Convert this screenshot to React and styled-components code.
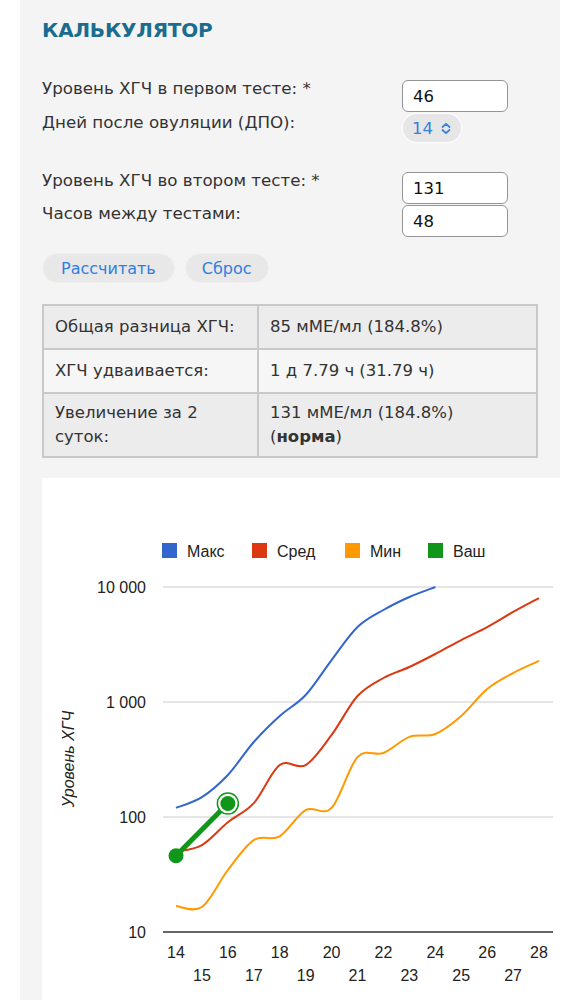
import React from "react";
import styled, { createGlobalStyle } from "styled-components";

const GlobalStyle = createGlobalStyle`
  html, body { margin: 0; padding: 0; background: #ffffff; }
  body { font-family: "DejaVu Sans", Verdana, sans-serif; color: #333; }
`;

const Page = styled.div`
  padding-left: 20px;
`;

const Panel = styled.div`
  width: 540px;
  min-height: 1000px;
  box-sizing: border-box;
  background: #f4f4f4;
  padding: 14px 22px 0 22px;
`;

const Title = styled.h2`
  margin: 0;
  font-size: 20px;
  line-height: 32px;
  font-weight: bold;
  color: #1b6d90;
  letter-spacing: -0.2px;
`;

const Group = styled.div`
  display: flex;
  flex-direction: column;
  gap: ${(p) => p.$gap}px;
  margin-top: ${(p) => p.$top}px;
`;

const Row = styled.div`
  display: flex;
  align-items: flex-start;
`;

const Label = styled.label`
  width: 360px;
  flex: none;
  margin-top: -2px;
  font-size: 16.7px;
  line-height: 20px;
  color: #333;
`;

const Input = styled.input`
  width: 106px;
  height: 32px;
  box-sizing: border-box;
  border: 1.5px solid #959595;
  border-radius: 6px;
  background: #fff;
  padding: 0 10px;
  font-family: "DejaVu Sans", Verdana, sans-serif;
  font-size: 16.5px;
  color: #111;
  outline: none;
`;

const SelectPill = styled.div`
  display: inline-flex;
  align-items: center;
  gap: 7px;
  height: 28px;
  box-sizing: border-box;
  padding: 0 9px 0 9px;
  margin-left: 1px;
  border-radius: 14px;
  background: #e6e6e6;
  box-shadow: 0 0 0 1.5px #fbfbfb;
  color: #3380e0;
  font-size: 16.5px;
`;

const Buttons = styled.div`
  display: flex;
  gap: 10px;
  margin-top: 16px;
`;

const Button = styled.button`
  height: 30px;
  padding: 0 ${(p) => p.$pad}px;
  border-radius: 15px;
  border: 1px solid #f1f1f1;
  background: #e8e8e8;
  color: #2f7de0;
  font-family: "DejaVu Sans", Verdana, sans-serif;
  font-size: 16px;
  cursor: pointer;
`;

const Table = styled.table`
  margin-top: 21px;
  width: 496px;
  border-collapse: collapse;
`;

const Tr = styled.tr`
  background: ${(p) => (p.$light ? "#f6f6f6" : "#ececec")};
`;

const Td = styled.td`
  width: ${(p) => p.$w || "auto"};
  border: 2px solid #c8c8c8;
  padding: ${(p) => (p.$tall ? "7px 11px 7px 11px" : "9px 11px 9px 11px")};
  font-size: 16.5px;
  line-height: 24px;
  color: #333;
  vertical-align: top;
`;

const ChartBox = styled.div`
  margin-top: 20px;
  width: 518px;
  height: 522px;
  background: #ffffff;
`;

const ChartSvg = styled.svg`
  display: block;
  font-family: "Liberation Sans", Arial, sans-serif;
`;

const Chevron = () => (
  <svg width="12" height="13" viewBox="0 0 12 13" fill="none">
    <path d="M2.5 5 L6 1.8 L9.5 5" stroke="#3380e0" strokeWidth="1.7" strokeLinecap="round" strokeLinejoin="round" />
    <path d="M2.5 8 L6 11.2 L9.5 8" stroke="#3380e0" strokeWidth="1.7" strokeLinecap="round" strokeLinejoin="round" />
  </svg>
);

const X0 = 176;
const DX = 25.93;
const xOf = (d) => X0 + (d - 14) * DX;
const yOf = (v) => 932 - 115 * (Math.log10(v) - 1);

const maxV = [120, 149, 232, 449, 756, 1151, 2317, 4488, 6310, 8185, 10000];
const avgV = [50, 57, 90, 132, 283, 283, 517, 1127, 1617, 2016, 2614, 3459, 4488, 6063, 8017];
const minV = [16.8, 16.5, 34.6, 63, 68, 115, 120, 332, 360, 497, 527, 756, 1297, 1786, 2275];

function smooth(values) {
  const pts = values.map((v, i) => [xOf(14 + i), yOf(v)]);
  let d = `M${pts[0][0]},${pts[0][1]}`;
  for (let i = 0; i < pts.length - 1; i++) {
    const p0 = pts[i - 1] || pts[i];
    const p1 = pts[i];
    const p2 = pts[i + 1];
    const p3 = pts[i + 2] || p2;
    const c1 = [p1[0] + (p2[0] - p0[0]) / 6, p1[1] + (p2[1] - p0[1]) / 6];
    const c2 = [p2[0] - (p3[0] - p1[0]) / 6, p2[1] - (p3[1] - p1[1]) / 6];
    d += ` C${c1[0]},${c1[1]} ${c2[0]},${c2[1]} ${p2[0]},${p2[1]}`;
  }
  return d;
}

const legend = [
  { x: 162, color: "#3366cc", label: "Макс" },
  { x: 252, color: "#dc3912", label: "Сред" },
  { x: 345, color: "#ff9900", label: "Мин" },
  { x: 428, color: "#109618", label: "Ваш" },
];

const grid = [
  { v: 10000, label: "10 000" },
  { v: 1000, label: "1 000" },
  { v: 100, label: "100" },
];

const Chart = () => {
  const g1 = [xOf(14), yOf(46)];
  const g2 = [xOf(16), yOf(131)];
  return (
    <ChartSvg width="518" height="522" viewBox="42 478 518 522">
      {legend.map((l) => (
        <g key={l.label}>
          <rect x={l.x} y={543} width={15} height={15} fill={l.color} />
          <text x={l.x + 25} y={556.5} fontSize="16" fill="#222">{l.label}</text>
        </g>
      ))}
      {grid.map((g) => (
        <g key={g.label}>
          <line x1={163} x2={553} y1={yOf(g.v)} y2={yOf(g.v)} stroke="#cccccc" strokeWidth="1" />
          <text x={146} y={yOf(g.v) + 5.5} fontSize="16" fill="#222" textAnchor="end">{g.label}</text>
        </g>
      ))}
      <text x={146} y={937.5} fontSize="16" fill="#222" textAnchor="end">10</text>
      <text
        x={0}
        y={0}
        fontSize="16"
        fontStyle="italic"
        fill="#222"
        textAnchor="middle"
        transform="translate(74 759) rotate(-90)"
      >
        Уровень ХГЧ
      </text>
      <path d={smooth(minV)} fill="none" stroke="#ff9900" strokeWidth="2" />
      <path d={smooth(avgV)} fill="none" stroke="#dc3912" strokeWidth="2" />
      <path d={smooth(maxV)} fill="none" stroke="#3366cc" strokeWidth="2" />
      <line x1={163} x2={553} y1={932} y2={932} stroke="#333" strokeWidth="1.5" />
      {Array.from({ length: 15 }, (_, i) => 14 + i).map((d) => (
        <text
          key={d}
          x={xOf(d)}
          y={d % 2 === 0 ? 958 : 981}
          fontSize="16"
          fill="#222"
          textAnchor="middle"
        >
          {d}
        </text>
      ))}
      <line x1={g1[0]} y1={g1[1]} x2={g2[0]} y2={g2[1]} stroke="#109618" strokeWidth="5" />
      <circle cx={g1[0]} cy={g1[1]} r={7.5} fill="#109618" />
      <circle cx={g2[0]} cy={g2[1]} r={10.5} fill="#fff" stroke="#109618" strokeWidth="1.5" />
      <circle cx={g2[0]} cy={g2[1]} r={7.5} fill="#109618" />
    </ChartSvg>
  );
};

export default function App() {
  return (
    <>
      <GlobalStyle />
      <Page>
        <Panel>
          <Title>КАЛЬКУЛЯТОР</Title>
          <Group $gap={2} $top={34}>
            <Row>
              <Label>Уровень ХГЧ в первом тесте: *</Label>
              <Input defaultValue="46" />
            </Row>
            <Row>
              <Label>Дней после овуляции (ДПО):</Label>
              <SelectPill>
                <span>14</span>
                <Chevron />
              </SelectPill>
            </Row>
          </Group>
          <Group $gap={1} $top={30}>
            <Row>
              <Label>Уровень ХГЧ во втором тесте: *</Label>
              <Input defaultValue="131" />
            </Row>
            <Row>
              <Label>Часов между тестами:</Label>
              <Input defaultValue="48" />
            </Row>
          </Group>
          <Buttons>
            <Button $pad={18}>Рассчитать</Button>
            <Button $pad={16}>Сброс</Button>
          </Buttons>
          <Table>
            <tbody>
              <Tr>
                <Td $w="191px">Общая разница ХГЧ:</Td>
                <Td>85 мМЕ/мл (184.8%)</Td>
              </Tr>
              <Tr $light>
                <Td $w="191px">ХГЧ удваивается:</Td>
                <Td>1 д 7.79 ч (31.79 ч)</Td>
              </Tr>
              <Tr>
                <Td $w="191px" $tall>Увеличение за 2 суток:</Td>
                <Td $tall>
                  131 мМЕ/мл (184.8%)
                  <br />(<b>норма</b>)
                </Td>
              </Tr>
            </tbody>
          </Table>
          <ChartBox>
            <Chart />
          </ChartBox>
        </Panel>
      </Page>
    </>
  );
}
